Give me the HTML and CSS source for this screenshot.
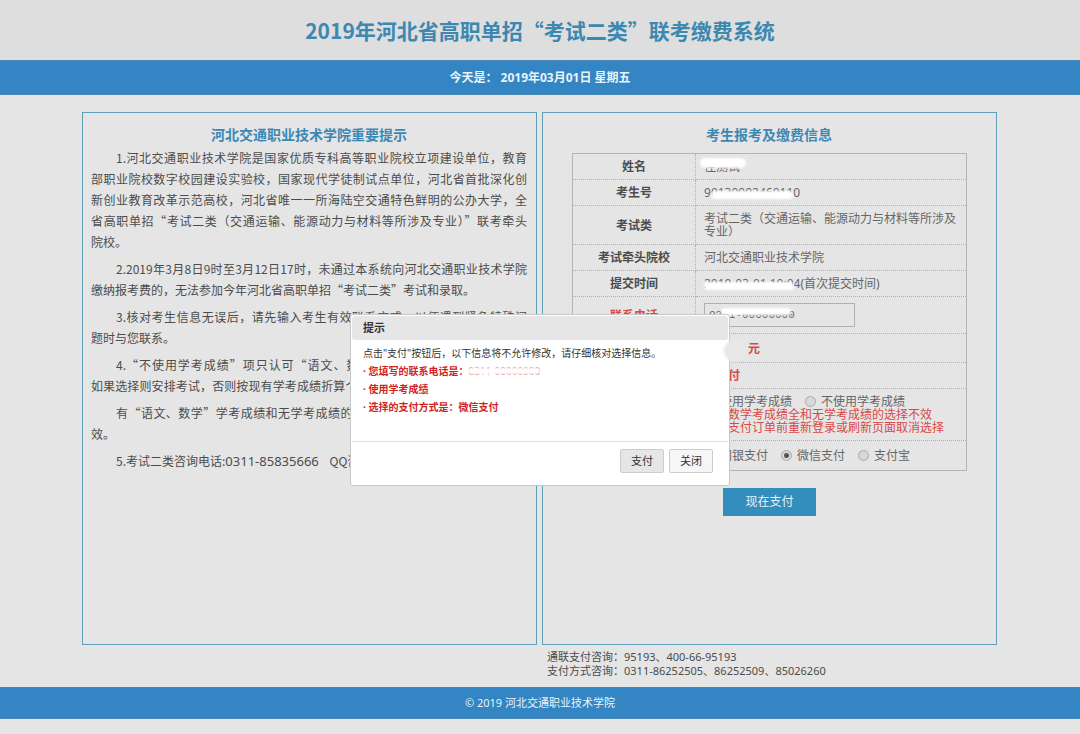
FILE: index.html
```html
<!DOCTYPE html>
<html lang="zh-CN">
<head>
<meta charset="utf-8">
<meta name="viewport" content="width=device-width, initial-scale=1">
<title>联考缴费系统</title>
<link rel="stylesheet" href="styles.css">
</head>
<body>
<header class="site-header">
  <h1 class="site-title">2019年河北省高职单招“考试二类”联考缴费系统</h1>
</header>
<div class="date-bar">今天是： 2019年03月01日 星期五</div>

<main class="content">
  <section class="panel notice">
    <h2 class="panel-title">河北交通职业技术学院重要提示</h2>
    <p><span class="line first">1.河北交通职业技术学院是国家优质专科高等职业院校立项建设单位，教育</span><span class="line">部职业院校数字校园建设实验校，国家现代学徒制试点单位，河北省首批深化创</span><span class="line">新创业教育改革示范高校，河北省唯一一所海陆空交通特色鲜明的公办大学，全</span><span class="line">省高职单招“考试二类（交通运输、能源动力与材料等所涉及专业）”联考牵头</span><span class="line last">院校。</span></p>
    <p><span class="line first">2.2019年3月8日9时至3月12日17时，未通过本系统向河北交通职业技术学院</span><span class="line last">缴纳报考费的，无法参加今年河北省高职单招“考试二类”考试和录取。</span></p>
    <p><span class="line first">3.核对考生信息无误后，请先输入考生有效联系方式，以便遇到紧急特殊问</span><span class="line last">题时与您联系。</span></p>
    <p><span class="line first">4.“不使用学考成绩”项只认可“语文、数学”学考成绩全和无的考生，</span><span class="line">如果选择则安排考试，否则按现有学考成绩折算个人文化素质成绩并计入总分数。</span></p>
    <p><span class="line first">有“语文、数学”学考成绩和无学考成绩的考生，其选择“不使用”方为有</span><span class="line last">效。</span></p>
    <p><span class="line first last">5.考试二类咨询电话:<span class="phone">0311-85835666</span>&nbsp;&nbsp;&nbsp; QQ咨询</span></p>
  </section>

  <section class="panel info">
    <h2 class="panel-title">考生报考及缴费信息</h2>
    <form class="pay-form">
      <table class="info-table">
        <tbody>
          <tr><th scope="row">姓名</th><td><span class="masked mask-name">佳测试</span></td></tr>
          <tr><th scope="row">考生号</th><td>9<span class="masked mask-low">013000246011</span>0</td></tr>
          <tr class="row-type"><th scope="row">考试类</th><td>考试二类（交通运输、能源动力与材料等所涉及专业）</td></tr>
          <tr><th scope="row">考试牵头院校</th><td>河北交通职业技术学院</td></tr>
          <tr><th scope="row">提交时间</th><td><span class="masked mask-low">2019-03-01 10:0</span>4(首次提交时间)</td></tr>
          <tr class="row-phone"><th scope="row" class="red"><label for="tel">联系电话</label></th><td><span class="masked mask-tel"><input id="tel" class="tel" type="text" value="0311-00000000"></span></td></tr>
          <tr class="row-fee"><th scope="row">缴费金额</th><td class="red strong"><span class="fee">000</span>元</td></tr>
          <tr><th scope="row">缴费状态</th><td class="red strong">未支付</td></tr>
          <tr class="row-score"><th scope="row">学考成绩</th><td>
            <div class="choices">
              <label><input type="radio" name="score">使用学考成绩</label>
              <label><input type="radio" name="score">不使用学考成绩</label>
            </div>
            <div class="red">语文数学考成绩全和无学考成绩的选择不效<br>可在支付订单前重新登录或刷新页面取消选择</div>
          </td></tr>
          <tr class="row-method"><th scope="row">支付方式</th><td>
            <div class="choices">
              <label><input type="radio" name="method">网银支付</label>
              <label><input type="radio" name="method" checked>微信支付</label>
              <label><input type="radio" name="method">支付宝</label>
            </div>
          </td></tr>
        </tbody>
      </table>
      <button class="pay-now" type="button">现在支付</button>
    </form>
  </section>

  <div class="contact">
    <p>通联支付咨询：95193、400-66-95193</p>
    <p>支付方式咨询：0311-86252505、86252509、85026260</p>
  </div>
</main>

<footer class="site-footer">© 2019 河北交通职业技术学院</footer>

<dialog class="dialog" open aria-labelledby="dialog-title">
  <h3 class="dialog-title" id="dialog-title">提示</h3>
  <div class="dialog-body">
    <p>点击"支付"按钮后，以下信息将不允许修改，请仔细核对选择信息。</p>
    <ul>
      <li>· 您填写的联系电话是：<span class="masked mask-dialog">0311-00000000</span></li>
      <li>· 使用学考成绩</li>
      <li>· 选择的支付方式是：微信支付</li>
    </ul>
  </div>
  <div class="dialog-actions">
    <button type="button" class="primary">支付</button>
    <button type="button">关闭</button>
  </div>
</dialog>
</body>
</html>
```
FILE: styles.css
```css
* { box-sizing: border-box; }

body {
  position: relative;
  display: flex;
  flex-direction: column;
  min-height: 100vh;
  margin: 0;
  padding-bottom: 15px;
  background: #e5e5e5;
  color: #4c4c4c;
  font: 12px/13px "Noto Sans", "Noto Sans CJK SC", sans-serif;
}

h1, h2, h3, p, ul { margin: 0; padding: 0; }
button, input { font-family: inherit; color: inherit; }

.site-header {
  padding: 15px 0;
  background: #dedede;
  text-align: center;
}

.site-title {
  color: #3c88b0;
  font: bold 21px/30px "Noto Sans CJK SC", sans-serif;
}

.date-bar, .site-footer {
  border-top: 1px solid #4a86b2;
  border-bottom: 1px solid #4a86b2;
  background: #3385c3;
  color: #eaf3f8;
  text-align: center;
}

.date-bar { font-weight: bold; line-height: 33px; }
.site-footer { font-size: 11px; line-height: 30px; }

.content {
  flex: 1;
  display: grid;
  grid-template-columns: 1fr 1fr;
  grid-template-rows: 1fr auto;
  column-gap: 5px;
  padding: 17px 83px 9px 82px;
}

.panel {
  padding: 11px 9px 11px 8px;
  border: 1px solid #5f9fba;
}

.panel-title {
  color: #3c88b5;
  font: bold 14px/20px "Noto Sans CJK SC", sans-serif;
  text-align: center;
}

.notice p {
  margin-bottom: 6px;
  font: 12px/21px "Noto Sans CJK SC", sans-serif;
}
.notice .panel-title { margin-bottom: 3px; }
.line {
  display: block;
  text-align: justify;
  text-align-last: justify;
  white-space: nowrap;
}
.line.first { padding-left: 25px; }
.line.last { text-align-last: left; }
.phone { font-family: "Noto Sans", sans-serif; font-size: 13px; line-height: 1; }

.pay-form {
  display: flex;
  flex-direction: column;
  align-items: center;
  gap: 17px;
  padding: 9px 20px 0 21px;
}

.info-table {
  width: 100%;
  border: 1px solid #b5b5b5;
  border-collapse: collapse;
  table-layout: fixed;
}
.info-table th, .info-table td {
  height: 26px;
  padding: 0;
  border: 1px dotted #b0b0b0;
}
.info-table th { width: 123px; }
.info-table td { padding-left: 8px; color: #666; }
.info-table .row-type td { height: 39px; }
.info-table .row-phone td { height: 37px; }
.info-table .row-fee td { height: 29px; }
.info-table .row-score td { height: 52px; }
.info-table .row-method td { height: 30px; }
.info-table .red { color: #d84848; }
.info-table .strong { font-weight: bold; }

.tel {
  display: block;
  width: 151px;
  height: 24px;
  padding: 0 4px;
  border: 1px solid #b0b0b0;
  background: transparent;
  font: 11px/14px "Liberation Mono", monospace;
}

.fee { display: inline-block; width: 44px; }

.choices { display: flex; gap: 13px; }
.choices label { display: flex; align-items: center; gap: 5px; }
.choices input {
  appearance: none;
  width: 11px;
  height: 11px;
  margin: 0;
  border: 1px solid #aaa;
  border-radius: 50%;
  background: #d8d8d8;
}
.choices input:checked {
  background: radial-gradient(circle, #555 0 2px, #d8d8d8 3px);
}

.pay-now {
  padding: 7px 22px;
  border: 0;
  background: #338dbd;
  color: #e8f3f8;
  font-size: 12px;
  line-height: 14px;
}

/* Personal data is brushed over in white */
.masked { position: relative; display: inline-block; }
.masked::after {
  content: "";
  position: absolute;
  inset: 5px 0 0;
  border-radius: 4px;
  background: #fff;
  filter: blur(1px);
}
.mask-name::after { inset: -2px -6px 5px -4px; border-radius: 7px; }
.mask-tel::after { inset: 5px 64px 12px 17px; }
.mask-dialog::after { inset: 4px 0; }

.contact {
  grid-column: 2;
  padding: 5px 5px 0;
  font-size: 11px;
  line-height: 14px;
}

.dialog {
  position: absolute;
  top: 314px;
  width: 380px;
  margin: 0 auto;
  padding: 1px;
  border: 1px solid #c8c8c8;
  border-radius: 3px;
  background: #fff;
  color: #333;
}
/* Smudge on the dialog's right edge */
.dialog::after {
  content: "";
  position: absolute;
  top: 25px;
  right: -17px;
  width: 22px;
  height: 22px;
  border-radius: 50%;
  background: #e8e8e8;
  filter: blur(1px);
}
.dialog-title {
  padding: 4px 11px;
  border-radius: 3px;
  background: #e6e6e6;
  font-size: 11px;
  line-height: 16px;
}
.dialog-body {
  min-height: 102px;
  padding: 4px 11px;
  border-bottom: 1px solid #ddd;
  font-size: 10px;
  line-height: 18px;
}
.dialog-body ul { list-style: none; color: #d02424; font-weight: bold; }
.dialog-body .masked { line-height: 14px; font-weight: normal; color: #d98080; }
.dialog-actions {
  display: flex;
  justify-content: flex-end;
  gap: 5px;
  padding: 7px 15px 11px;
}
.dialog-actions button {
  padding: 3px 10px;
  border: 1px solid #ccc;
  border-radius: 2px;
  background: #f6f6f6;
  font-size: 11px;
  line-height: 16px;
}
.dialog-actions .primary { background: #e6e6e6; }
```
